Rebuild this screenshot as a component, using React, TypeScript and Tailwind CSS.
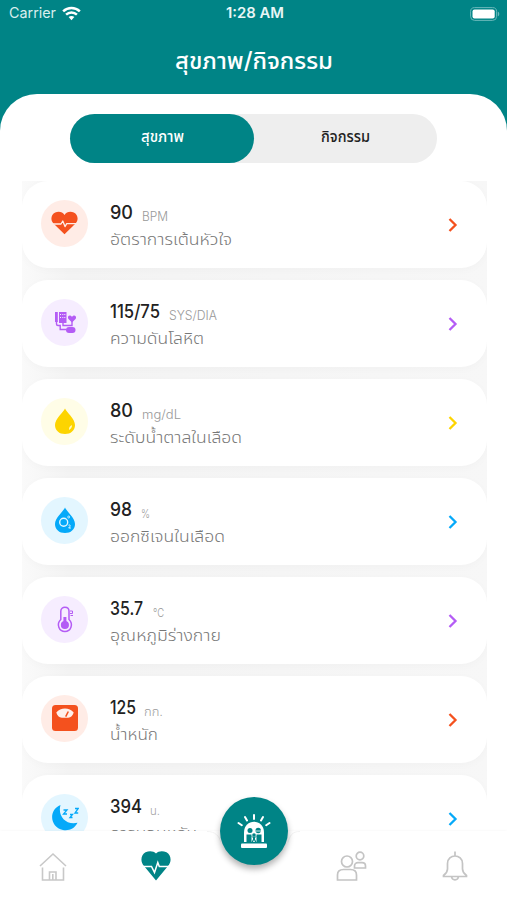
import type { ReactNode } from "react";

function HeartPulse() {
  return (
    <svg viewBox="0 0 27 24" className="h-[24px] w-[27px]">
      <path d="M13.5 23.3 2.2 12.2C-.9 8.6.2 3.3 4.2 1.5 8-.1 11.6 1 13.5 4 15.4 1 19-.1 22.8 1.5c4 1.8 5.1 7.1 2 10.7Z" fill="#f4511e" />
      <path d="M1 13h9l1.8-3 2.2 5.6 1.700-2.900h10" fill="none" stroke="#ffece6" strokeWidth="1.300" strokeLinejoin="round" />
    </svg>
  );
}

function Pressure() {
  return (
    <svg viewBox="0 0 22 23" className="h-[23px] w-[22px]">
      <path d="M1 1h2.800v10H1Z M5 1h7.500v11H5Z" fill="#b45cf5" />
      <path d="M6.500 3v1M8.800 3v1M10.800 3v1M6.500 6v1M8.800 6v1M10.800 6v1" stroke="#f6edff" strokeWidth="1" />
      <path d="M18 11.500 14.500 8c-1.200-1.500-.3-3.300 1.200-3.400 1 0 1.800.6 2.300 1.400.5-.8 1.300-1.400 2.300-1.400 1.500.1 2.400 1.900 1.200 3.400Z" fill="#b45cf5" />
      <path d="M2.500 10v3c0 1 .6 1.500 1.500 1.500h2.200v4h6M9 12v2.500h9V9" fill="none" stroke="#b45cf5" strokeWidth="1.400" />
      <rect x="12" y="16" width="9.500" height="6" rx="3" fill="#b45cf5" />
    </svg>
  );
}

function Drop({ oxygen = false }: { oxygen?: boolean }) {
  return (
    <svg viewBox="0 0 22 27" className="h-[27px] w-[22px]">
      <path d="M11 .5C9.500 4.200 1 10.700 1 17c0 5.600 4.300 9 10 9s10-3.400 10-9C21 10.700 12.500 4.200 11 .5Z" fill={oxygen ? "#05a9f9" : "#fdd400"} />
      {oxygen ? (
        <g fill="none" stroke="#e3f6ff">
          <circle cx="9.700" cy="15.300" r="4" strokeWidth="1.400" />
          <circle cx="14.700" cy="10" r="1" strokeWidth=".8" />
          <path d="M14.500 18.200c1.800-.8 2.200.6 1.200 1.600l-1 1.200h2.200" strokeWidth="1" />
        </g>
      ) : (
        <path d="M18 17c.1 2.200-1 4-3 5-.2-2 .6-4.100 3-5Z" fill="#fff9c4" />
      )}
    </svg>
  );
}

function Thermo() {
  return (
    <svg viewBox="0 0 18 27" className="h-[27px] w-[18px]" fill="none" stroke="#b45cf5" strokeWidth="1.500">
      <path d="M4.800 13.500V5.200C4.800-.1 13 .1 13 5.200v8.300c4.800 4.700 1.800 12-4.100 12s-8.900-7.400-4.100-12Z" />
      <path d="M8.900 11v8" strokeWidth="3" />
      <circle cx="8.900" cy="19" r="3.300" fill="#b45cf5" />
      <path d="M14 5h2.500v2.500H14M14.500 9.500h2.500" strokeWidth="1" />
    </svg>
  );
}

function Scale() {
  return (
    <svg viewBox="0 0 26 26" className="h-[26px] w-[26px]">
      <rect width="26" height="26" rx="3.500" fill="#f4511e" />
      <path d="M4.300 7.500C8.500 2.300 17.500 2.300 21.700 7.500c-.8 3-2.800 5.200-5.500 5.200h-6.400c-2.700 0-4.700-2.200-5.500-5.200Z" fill="#fff0eb" />
      <path d="m13.700 11.700 2.600-5.200" stroke="#f4511e" strokeWidth="1.500" />
    </svg>
  );
}

function Moon() {
  return (
    <svg viewBox="0 0 28 27" className="h-[27px] w-[28px]">
      <path d="M9.500 1C6.500 11 14 21.500 26.500 18.800 23.500 25 17.500 27 12 26-1 23.500-3 6 9.500 1Z" fill="#05a9f9" />
      <path d="M12.500 6h3.500l-3.500 4H16M19 10.500h2.500l-2.500 3h2.500M24 4.500h3.200L24 9h3.200" fill="none" stroke="#05a9f9" strokeWidth="1.300" />
    </svg>
  );
}

type Item = {
  value: string;
  unit: string;
  label: string;
  color: string;
  bg: string;
  icon: ReactNode;
  labelWidth: number;
  valueWidth: number;
  unitWidth: number;
  unitSize: number;
  gap: number;
};

const items: Item[] = [
  { value: "90", unit: "BPM", label: "อัตราการเต้นหัวใจ", color: "#f4511e", bg: "#ffece6", icon: <HeartPulse />, labelWidth: 122, valueWidth: 23, unitWidth: 26, unitSize: 12.5, gap: 9 },
  { value: "115/75", unit: "SYS/DIA", label: "ความดันโลหิต", color: "#b45cf5", bg: "#f6edff", icon: <Pressure />, labelWidth: 94, valueWidth: 50, unitWidth: 48, unitSize: 12.5, gap: 9 },
  { value: "80", unit: "mg/dL", label: "ระดับน้ำตาลในเลือด", color: "#fdd400", bg: "#fffde7", icon: <Drop />, labelWidth: 132, valueWidth: 23, unitWidth: 39, unitSize: 12.5, gap: 9 },
  { value: "98", unit: "%", label: "ออกซิเจนในเลือด", color: "#05a9f9", bg: "#e3f6ff", icon: <Drop oxygen />, labelWidth: 115, valueWidth: 22, unitWidth: 9, unitSize: 11.5, gap: 9 },
  { value: "35.7", unit: "°C", label: "อุณหภูมิร่างกาย", color: "#b45cf5", bg: "#f6edff", icon: <Thermo />, labelWidth: 111, valueWidth: 33, unitWidth: 11, unitSize: 12, gap: 10 },
  { value: "125", unit: "กก.", label: "น้ำหนัก", color: "#f4511e", bg: "#ffece6", icon: <Scale />, labelWidth: 48, valueWidth: 26, unitWidth: 19, unitSize: 12.5, gap: 8 },
  { value: "394", unit: "น.", label: "การนอนหลับ", color: "#05a9f9", bg: "#e3f6ff", icon: <Moon />, labelWidth: 87, valueWidth: 32, unitWidth: 10, unitSize: 12.5, gap: 8 },
];

// A line of real text whose advance is fitted to a given width.
function Fit({ text, width, size, weight = 400, color, height = 30 }: { text: string; width: number; size: number; weight?: number; color: string; height?: number }) {
  return (
    <svg width={width} height={height} className="block shrink-0 overflow-visible">
      <text x="0" y={height - 9} fontSize={size} fontWeight={weight} fill={color} textLength={width} lengthAdjust="spacingAndGlyphs">
        {text}
      </text>
    </svg>
  );
}

function Card({ item }: { item: Item }) {
  return (
    <div className="flex h-[87px] shrink-0 items-center rounded-[26px] bg-white pl-[19px] pr-[29px] shadow-[0_2px_8px_rgba(0,0,0,0.025)]">
      <div className="mb-[3px] flex size-[47px] items-center justify-center rounded-full" style={{ backgroundColor: item.bg }}>
        {item.icon}
      </div>
      <div className="ml-[22px] flex flex-1 flex-col pt-[6px]">
        <div className="flex h-[26px] items-end" style={{ gap: item.gap }}>
          <Fit text={item.value} width={item.valueWidth} size={18.5} weight={500} color="#222" height={32} />
          <div className="-mb-[2px]">
            <Fit text={item.unit} width={item.unitWidth} size={item.unitSize} weight={300} color="#999" height={29} />
          </div>
        </div>
        <div className="flex h-[26px] items-end">
          <Fit text={item.label} width={item.labelWidth} size={16.5} weight={300} color="#777" />
        </div>
      </div>
      <svg viewBox="0 0 10 16" className="h-4 w-[10px]" fill="none" stroke={item.color} strokeWidth="2.300">
        <path d="m1.500 2 6 6-6 6" />
      </svg>
    </div>
  );
}

export default function App() {
  return (
    <div className="relative flex h-[900px] w-[507px] flex-col overflow-hidden bg-[#008486] font-['Inter','Noto_Sans_Thai','Noto_Sans',sans-serif]">
      <header className="flex h-[94px] shrink-0 flex-col">
        <div className="flex h-[27px] items-center justify-between pl-[9px] pr-[7px] text-white">
          <div className="flex w-[180px] items-center gap-[6px]">
            <div className="pt-[3px]">
              <Fit text="Carrier" width={47} size={14.5} color="#d9eeee" height={24} />
            </div>
            <svg viewBox="0 0 20 15" className="h-[15px] w-[19px]" fill="none" stroke="#fff" strokeWidth="2.600">
              <path d="M1.200 5.200c5-4.800 12.600-4.800 17.600 0M4.300 8.800c3.200-3.100 8.200-3.100 11.400 0" />
              <path d="m10 14.500-3-3.300c1.700-1.500 4.300-1.500 6 0Z" fill="#fff" stroke="none" />
            </svg>
          </div>
          <div className="pt-[3px]">
            <Fit text="1:28 AM" width={58} size={14.5} weight={600} color="#e9f6f6" height={24} />
          </div>
          <div className="flex w-[180px] justify-end">
            <svg viewBox="0 0 31 14" className="h-[14px] w-[31px]">
              <rect x="1.600" y=".6" width="26" height="12.800" rx="4" fill="none" stroke="#69b8ba" />
              <rect x="3.500" y="2.500" width="22.200" height="9" rx="2" fill="#fff" />
              <path d="M28.800 4.500c2 1 2 4 0 5Z" fill="#69b8ba" />
            </svg>
          </div>
        </div>
        <h1 className="flex h-[51px] items-end justify-center">
          <Fit text="สุขภาพ/กิจกรรม" width={158} size={23} weight={500} color="#fff" height={50} />
        </h1>
      </header>

      <main className="flex h-[806px] shrink-0 flex-col items-center rounded-t-[37px] bg-white pt-[20px]">
        <div className="flex h-[49px] w-[367px] shrink-0 rounded-full bg-[#eee]">
          <div className="flex h-[49px] w-[184px] items-center justify-center rounded-full bg-[#008486] pt-[1px]">
            <Fit text="สุขภาพ" width={43} size={15} weight={500} color="#fff" height={24} />
          </div>
          <div className="flex flex-1 items-center justify-center pt-[1px]">
            <Fit text="กิจกรรม" width={49} size={15} weight={500} color="#222" height={24} />
          </div>
        </div>
        <div className="ml-[2px] mt-[18px] flex w-[465px] flex-1 flex-col gap-[12px] overflow-hidden bg-linear-to-r from-[#fafafa] via-[#f3f3f3] via-10% to-[#f7f7f7]">
          {items.map((item) => (
            <Card key={item.label} item={item} />
          ))}
        </div>
      </main>

      <nav className="absolute inset-x-0 bottom-0 grid h-[69px] grid-cols-[105px_102px_93px_103px_104px] bg-white shadow-[0_-1px_2px_rgba(0,0,0,0.025)]">
        <div className="flex items-start justify-center pt-[21px]">
          <svg viewBox="0 0 28 29" className="h-[29px] w-[28px]" fill="none" stroke="#c8c8c8" strokeWidth="1.600">
            <path d="M1 14 14 2l13 12M3.500 15.500V28h21V15.500M10.500 28v-8h6.500v8M13.800 22v6" />
          </svg>
        </div>
        <div className="flex items-start justify-center pt-[20px]">
          <svg viewBox="0 0 30 30" className="size-[30px]">
            <path d="M15 29.500 3 15C-1.300 10 .2 3.500 4.500 1.300 8.500-.7 12.700 0 15 2.500c2.300-2.500 6.500-3.200 10.500-1.200C29.800 3.500 31.300 10 27 15Z" fill="#008486" />
            <path d="M0 15.500h10.500l3 6 3.300-10 1.500 4H30" fill="none" stroke="#fff" strokeWidth="1.500" />
          </svg>
        </div>
        <div className="relative">
          <svg viewBox="0 0 94 12" className="absolute left-0 top-0 h-[12px] w-[94px]" fill="none" stroke="#f3f3f3">
            <path d="M0 .5c8 0 12 4 14 11M93 .5c-8 0-10 4-12 11" />
          </svg>
          <div className="absolute -top-[34px] left-[13px] flex size-[68px] items-center justify-center rounded-full bg-[#008486] shadow-[0_4px_6px_rgba(0,0,0,0.3)]">
            <svg viewBox="0 0 34 36" className="h-[36px] w-[34px]">
              <g stroke="#fff" strokeWidth="2" strokeLinecap="round">
                <path d="M17 2v4M8 4l2 3.500M26 4l-2 3.500M1.500 10l3.300 2.300M32.500 10l-3.300 2.300" />
              </g>
              <path d="M7 29v-9.500C7 5 27 5 27 19.500V29Z" fill="#fff" />
              <g fill="#008486">
                <circle cx="13" cy="17.500" r="2.500" />
                <circle cx="21.200" cy="17.500" r="2.700" />
                <path d="M9.500 29v-7.500h5V29ZM19.500 29v-7.500h5V29Z" />
                <circle cx="17" cy="22" r="1.800" />
                <path d="m14 23.500 2 1.200v1.500L14.500 29H16l1-2 1 2h1.500L18 26.200v-1.500l2-1.200Z" />
              </g>
              <path d="M18.500 18H24" stroke="#fff" strokeWidth=".8" fill="none" />
              <rect x="4" y="30.500" width="26" height="4.500" rx="1" fill="#fff" />
            </svg>
          </div>
        </div>
        <div className="flex items-start justify-center pt-[20px]">
          <svg viewBox="0 0 31 31" className="h-[31px] w-[31px]" fill="none" stroke="#c4c4c4" strokeWidth="1.700">
            <circle cx="11" cy="10.500" r="5.500" />
            <path d="M1.500 29v-5c0-3.500 2.500-5.500 6-5.500h7c3.500 0 6 2 6 5.500v5Z" />
            <circle cx="24" cy="5" r="3.800" />
            <path d="M18.500 17v-2c0-2 1.500-3.300 3.500-3.300h4c2 0 3.500 1.300 3.500 3.300v2Z" />
          </svg>
        </div>
        <div className="flex items-start justify-center pt-[20px]">
          <svg viewBox="0 0 26 31" className="h-[31px] w-[26px]" fill="none" stroke="#c4c4c4" strokeWidth="1.700">
            <path d="M13 .5V5M5.500 18v-5.500c0-10 15-10 15 0V18c0 3 1.500 4.500 4 6.500v1H1.500v-1c2.500-2 4-3.500 4-6.500ZM9.500 25.500c.5 4.500 6.500 4.500 7 0" />
          </svg>
        </div>
      </nav>
    </div>
  );
}
